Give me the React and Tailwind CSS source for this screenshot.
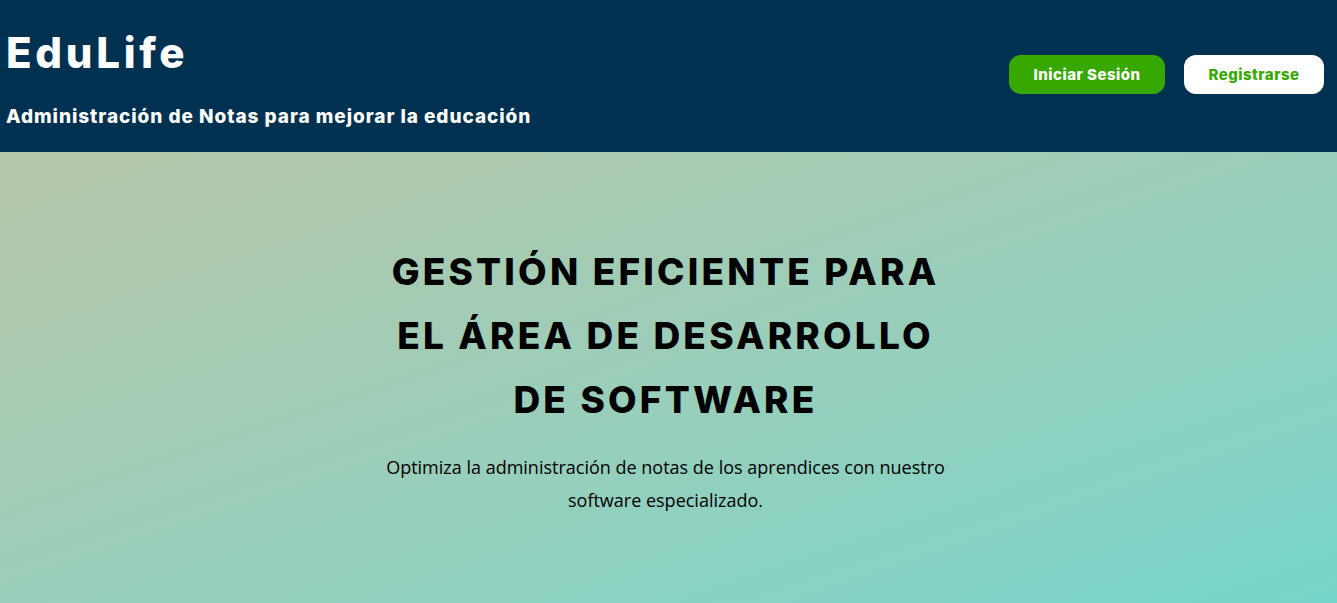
export default function App() {
  return (
    <div className="w-full min-h-[603px] flex flex-col" style={{ fontFamily: "Inter, 'Liberation Sans', sans-serif" }}>
      <header className="h-[152px] bg-[#003150] flex items-start justify-between px-[6px]">
        <div className="flex flex-col">
          <h1 className="text-[42px] leading-none font-extrabold text-white mt-[32px] tracking-[3.7px]">EduLife</h1>
          <p className="text-[19px] leading-none font-extrabold text-white mt-[33px] tracking-[0.95px]">Administración de Notas para mejorar la educación</p>
        </div>
        <div className="flex items-center gap-[19px] mt-[55px] mr-[7px]">
          <button className="h-[39px] w-[156px] rounded-[12px] bg-[#37a800] text-white text-[15px] font-extrabold tracking-[0.5px] pt-[2px]">Iniciar Sesión</button>
          <button className="h-[39px] w-[140px] rounded-[12px] bg-white text-[#37a800] text-[15px] font-extrabold tracking-[0.5px] pt-[2px]">Registrarse</button>
        </div>
      </header>
      <main className="h-[451px] bg-gradient-to-br from-[#b6c5a8] to-[#76d6cb] flex flex-col items-center pr-[6px]">
        <h2 className="mt-[88px] text-[37px] leading-[64px] font-extrabold text-black text-center tracking-[3.2px] w-[640px]">
          GESTIÓN EFICIENTE PARA<br />EL ÁREA DE DESARROLLO<br />DE SOFTWARE
        </h2>
        <p className="mt-[19px] text-[18px] leading-[33px] text-black text-center w-[600px]" style={{ fontFamily: "'Open Sans', sans-serif" }}>
          Optimiza la administración de notas de los aprendices con nuestro software especializado.
        </p>
      </main>
    </div>
  );
}
